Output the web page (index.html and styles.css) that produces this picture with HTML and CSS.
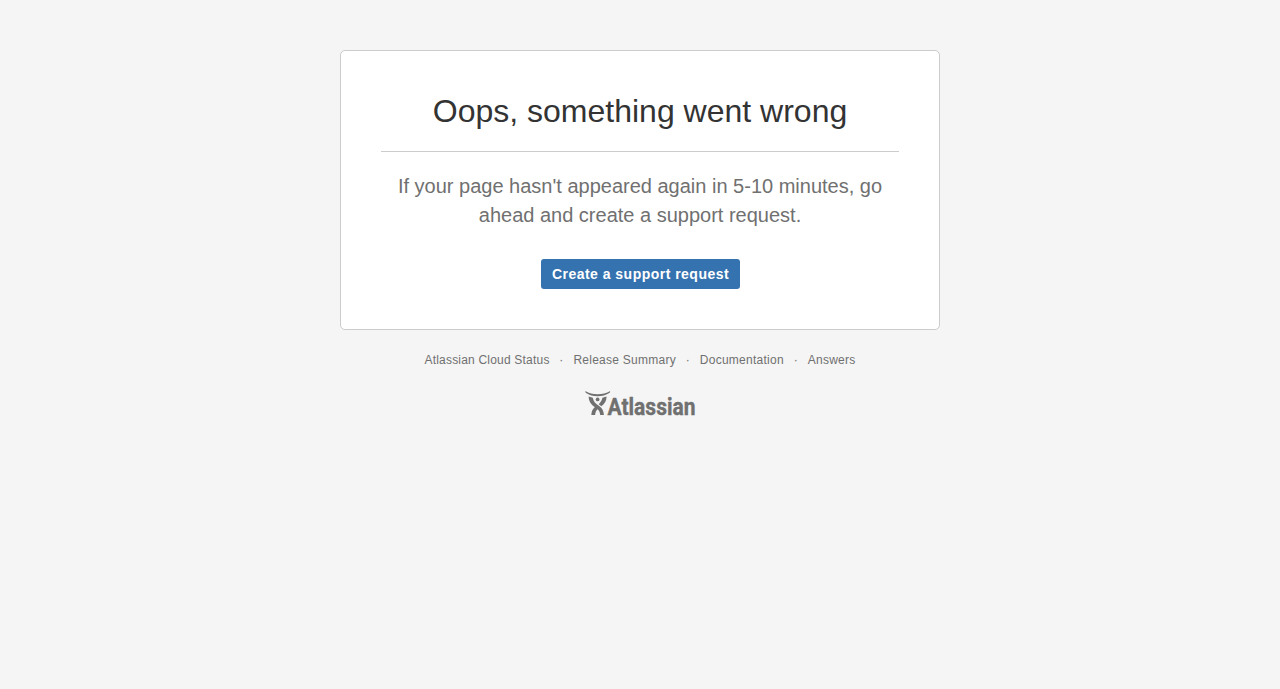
FILE: index.html
```html
<!DOCTYPE html>
<html lang="en">
<head>
<meta charset="utf-8">
<title>Oops, something went wrong</title>
<link rel="stylesheet" href="styles.css">
</head>
<body>
<main class="panel">
<h1 class="title">Oops, something went wrong</h1>
<p class="message">If your page hasn't appeared again in 5-10 minutes, go ahead and create a support request.</p>
<a class="button" href="#">Create a support request</a>
</main>
<footer class="footer">
<ul class="links">
<li>Atlassian Cloud Status</li><li>Release Summary</li><li>Documentation</li><li>Answers</li>
</ul>
<div class="brand">
<svg class="mark" width="26" height="26" viewBox="0 0 26 26" fill="#707070"><path d="M.2 1C4 3.300 8 4.200 12.600 4.200S21.500 3.300 25.200 1L24.700 2.700C21 5.200 17 6.200 12.600 6.200S4 5.200 .7 2.700Z"/><circle cx="12.600" cy="9.400" r="1.900"/><path d="M3.600 6.500L7.800 7.700C8.500 11.500 10.500 13.500 14.200 16.100C17.200 18.300 18.700 21 18.900 25H15.200C15 22.500 14 20.300 12.600 19.200C11.200 20.300 10.300 22.500 10.100 25H6.300C6.500 21.500 7.500 19.300 9.800 17.200C5.700 14.200 3.700 11 3.600 6.500Z"/><path d="M21.600 6.500L17.400 7.700C16.900 10.500 15.600 12.300 13.700 14.200L16.400 16.200C19.800 13.700 21.500 10.800 21.600 6.500Z"/></svg>
<svg class="wordmark" width="88" height="26" viewBox="0 0 88 26"><text x="0.500" y="24.600" textLength="88" lengthAdjust="spacingAndGlyphs">Atlassian</text></svg>
</div>
</footer>
</body>
</html>
```
FILE: styles.css
```css
body{margin:0;background:#f5f5f5;color:#333;font-family:Arial,"Liberation Sans",sans-serif}
.panel{box-sizing:border-box;width:600px;height:280px;margin:50px auto 0;padding:40px;border:1px solid #ccc;border-radius:5px;background:#fff;text-align:center}
.title{margin:0;padding-bottom:20px;border-bottom:1px solid #ccc;font-size:32px;font-weight:400;line-height:40px}
.message{margin:20px 0 0;color:#707070;font-size:20px;line-height:29px}
.button{display:inline-block;box-sizing:border-box;width:199px;height:30px;margin:29px 0 0 1px;border-radius:3px;background:#3572b0;color:#fff;font-size:14px;font-weight:700;letter-spacing:.48px;line-height:30px;text-decoration:none;white-space:nowrap}
.footer{color:#707070;font-size:12px;line-height:20px}
.links{display:flex;justify-content:center;margin:20px 0 0;padding:0;list-style:none;letter-spacing:.26px}
.links li:first-child{letter-spacing:.2px}
.links li+li::before{content:"·";display:inline-block;width:23.800px;text-align:center}
.brand{display:flex;justify-content:center;margin:20px auto 0;width:110px}
.mark{flex:none;margin-right:-4px}
.wordmark{flex:none;overflow:visible;fill:#707070;stroke:#707070;stroke-width:.4;font:700 24.500px Roboto,sans-serif}
```
